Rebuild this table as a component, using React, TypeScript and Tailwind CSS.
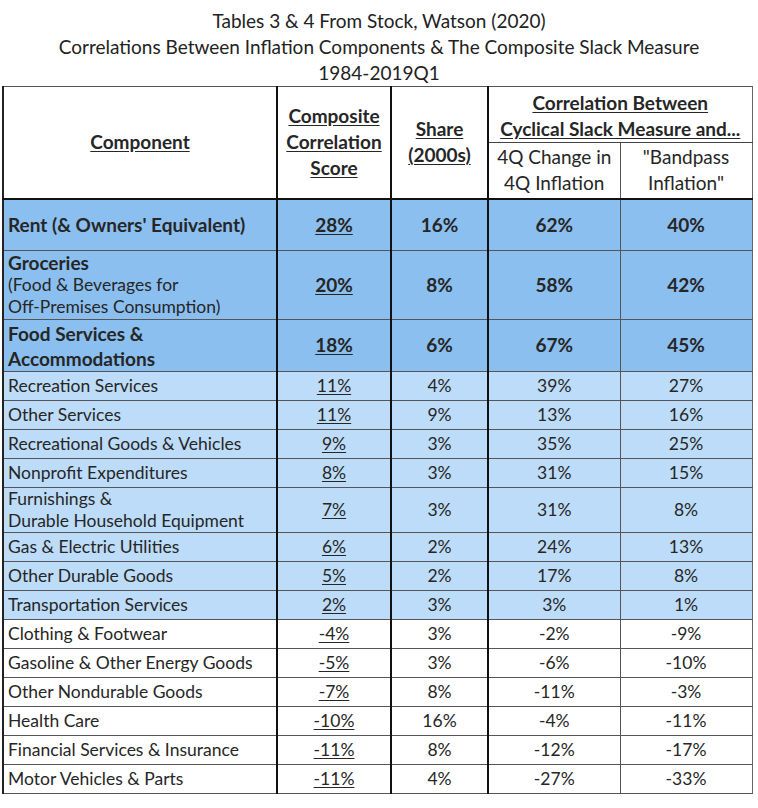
import React from 'react';

type Row = {
  name: React.ReactNode;
  score: string;
  share: string;
  change: string;
  bandpass: string;
  tone: 'dark' | 'light' | 'white';
  bold?: boolean;
  h: string;
};

const rows: Row[] = [
  { name: "Rent (& Owners' Equivalent)", score: '28%', share: '16%', change: '62%', bandpass: '40%', tone: 'dark', bold: true, h: 'h-[52px]' },
  {
    name: (
      <div className="leading-[22px]">
        <div className="font-bold text-[19px]">Groceries</div>
        <div className="font-normal text-[17.5px]">(Food &amp; Beverages for</div>
        <div className="font-normal text-[17.5px]">Off-Premises Consumption)</div>
      </div>
    ),
    score: '20%', share: '8%', change: '58%', bandpass: '42%', tone: 'dark', bold: true, h: 'h-[69px]',
  },
  {
    name: (
      <div className="leading-[25px]">
        <div>Food Services &amp;</div>
        <div>Accommodations</div>
      </div>
    ),
    score: '18%', share: '6%', change: '67%', bandpass: '45%', tone: 'dark', bold: true, h: 'h-[52px]',
  },
  { name: 'Recreation Services', score: '11%', share: '4%', change: '39%', bandpass: '27%', tone: 'light', h: 'h-[29px]' },
  { name: 'Other Services', score: '11%', share: '9%', change: '13%', bandpass: '16%', tone: 'light', h: 'h-[29px]' },
  { name: 'Recreational Goods & Vehicles', score: '9%', share: '3%', change: '35%', bandpass: '25%', tone: 'light', h: 'h-[29px]' },
  { name: 'Nonprofit Expenditures', score: '8%', share: '3%', change: '31%', bandpass: '15%', tone: 'light', h: 'h-[29px]' },
  {
    name: (
      <div className="leading-[22px]">
        <div>Furnishings &amp;</div>
        <div>Durable Household Equipment</div>
      </div>
    ),
    score: '7%', share: '3%', change: '31%', bandpass: '8%', tone: 'light', h: 'h-[45px]',
  },
  { name: 'Gas & Electric Utilities', score: '6%', share: '2%', change: '24%', bandpass: '13%', tone: 'light', h: 'h-[29px]' },
  { name: 'Other Durable Goods', score: '5%', share: '2%', change: '17%', bandpass: '8%', tone: 'light', h: 'h-[29px]' },
  { name: 'Transportation Services', score: '2%', share: '3%', change: '3%', bandpass: '1%', tone: 'light', h: 'h-[29px]' },
  { name: 'Clothing & Footwear', score: '-4%', share: '3%', change: '-2%', bandpass: '-9%', tone: 'white', h: 'h-[29px]' },
  { name: 'Gasoline & Other Energy Goods', score: '-5%', share: '3%', change: '-6%', bandpass: '-10%', tone: 'white', h: 'h-[29px]' },
  { name: 'Other Nondurable Goods', score: '-7%', share: '8%', change: '-11%', bandpass: '-3%', tone: 'white', h: 'h-[29px]' },
  { name: 'Health Care', score: '-10%', share: '16%', change: '-4%', bandpass: '-11%', tone: 'white', h: 'h-[29px]' },
  { name: 'Financial Services & Insurance', score: '-11%', share: '8%', change: '-12%', bandpass: '-17%', tone: 'white', h: 'h-[29px]' },
  { name: 'Motor Vehicles & Parts', score: '-11%', share: '4%', change: '-27%', bandpass: '-33%', tone: 'white', h: 'h-[29px]' },
];

const toneBg = {
  dark: 'bg-[#8bbff0]',
  light: 'bg-[#bddcf9]',
  white: 'bg-white',
};

export default function App() {
  return (
    <div
      className="w-[758px] h-[808px] bg-white text-[#262626]"
      style={{ fontFamily: 'Lato, "Open Sans", sans-serif' }}
    >
      <div className="pt-[8px] text-center text-[19px] leading-[26px] text-[#222]">
        <div>Tables 3 &amp; 4 From Stock, Watson (2020)</div>
        <div>Correlations Between Inflation Components &amp; The Composite Slack Measure</div>
        <div>1984-2019Q1</div>
      </div>

      <table className="ml-[2px] w-[749px] border-collapse table-fixed text-[17.5px]">
        <colgroup>
          <col className="w-[274px]" />
          <col className="w-[114px]" />
          <col className="w-[97px]" />
          <col className="w-[132px]" />
          <col className="w-[132px]" />
        </colgroup>
        <thead className="text-[19px]">
          <tr className="h-[56px]">
            <th rowSpan={2} className="border-t border-t-[#555] border-l-2 border-l-[#222] border-r-2 border-r-[#111] border-b-2 border-b-[#111] font-bold text-center align-middle">
              <span className="underline underline-offset-2">Component</span>
            </th>
            <th rowSpan={2} className="border-t border-t-[#555] border-r-2 border-r-[#111] border-b-2 border-b-[#111] font-bold text-center align-middle leading-[26px]">
              <span className="underline underline-offset-2">Composite</span>
              <br />
              <span className="underline underline-offset-2">Correlation</span>
              <br />
              <span className="underline underline-offset-2">Score</span>
            </th>
            <th rowSpan={2} className="border-t border-t-[#555] border-r-2 border-r-[#111] border-b-2 border-b-[#111] font-bold text-center align-middle leading-[26px]">
              <span className="underline underline-offset-2">Share</span>
              <br />
              <span className="underline underline-offset-2">(2000s)</span>
            </th>
            <th colSpan={2} className="border-t border-t-[#555] border-r border-r-[#666] border-b border-b-[#444] font-bold text-center align-middle leading-[26px] pt-[2px]">
              <span className="underline underline-offset-2">Correlation Between</span>
              <br />
              <span className="underline underline-offset-2">Cyclical Slack Measure and...</span>
            </th>
          </tr>
          <tr className="h-[56px]">
            <th className="border-r border-r-[#555] border-b-2 border-b-[#111] font-normal text-center align-middle leading-[26px]">
              4Q Change in
              <br />
              4Q Inflation
            </th>
            <th className="border-r border-r-[#666] border-b-2 border-b-[#111] font-normal text-center align-middle leading-[26px]">
              "Bandpass
              <br />
              Inflation"
            </th>
          </tr>
        </thead>
        <tbody>
          {rows.map((r, i) => (
            <tr key={i} className={`${r.h} ${toneBg[r.tone]} ${r.bold ? 'font-bold text-[19px]' : ''}`}>
              <td className="border-l-2 border-l-[#222] border-r-2 border-r-[#111] border-b border-b-[#555] pl-[4px] align-middle leading-[22px]">
                {r.name}
              </td>
              <td className="border-r-2 border-r-[#111] border-b border-b-[#555] text-center align-middle">
                <span className="underline underline-offset-2">{r.score}</span>
              </td>
              <td className="border-r-2 border-r-[#111] border-b border-b-[#555] text-center align-middle">{r.share}</td>
              <td className="border-r border-r-[#555] border-b border-b-[#555] text-center align-middle">{r.change}</td>
              <td className="border-r border-r-[#666] border-b border-b-[#555] text-center align-middle">{r.bandpass}</td>
            </tr>
          ))}
        </tbody>
      </table>
    </div>
  );
}
